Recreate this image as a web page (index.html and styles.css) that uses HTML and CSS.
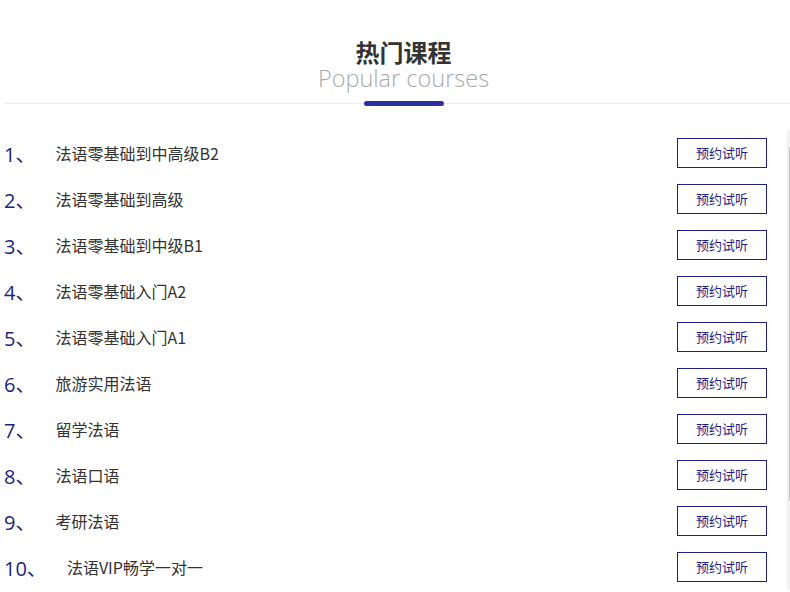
FILE: index.html
```html
<!DOCTYPE html>
<html lang="zh-CN">
<head>
    <meta charset="utf-8">
    <title>热门课程</title>
    <link rel="stylesheet" href="styles.css">
</head>
<body>
<div id="container">
    <div class="head">
        <h2>热门课程</h2>
        <p>Popular courses</p>
        <div class="bar"></div>
    </div>

    <div class="box">
        <ul class="course-list">
            <li class="item"><span class="num">1、</span><span class="name">法语零基础到中高级B2</span><a class="btn" href="#">预约试听</a></li>
            <li class="item"><span class="num">2、</span><span class="name">法语零基础到高级</span><a class="btn" href="#">预约试听</a></li>
            <li class="item"><span class="num">3、</span><span class="name">法语零基础到中级B1</span><a class="btn" href="#">预约试听</a></li>
            <li class="item"><span class="num">4、</span><span class="name">法语零基础入门A2</span><a class="btn" href="#">预约试听</a></li>
            <li class="item"><span class="num">5、</span><span class="name">法语零基础入门A1</span><a class="btn" href="#">预约试听</a></li>
            <li class="item"><span class="num">6、</span><span class="name">旅游实用法语</span><a class="btn" href="#">预约试听</a></li>
            <li class="item"><span class="num">7、</span><span class="name">留学法语</span><a class="btn" href="#">预约试听</a></li>
            <li class="item"><span class="num">8、</span><span class="name">法语口语</span><a class="btn" href="#">预约试听</a></li>
            <li class="item"><span class="num">9、</span><span class="name">考研法语</span><a class="btn" href="#">预约试听</a></li>
            <li class="item"><span class="num">10、</span><span class="name">法语VIP畅学一对一</span><a class="btn" href="#">预约试听</a></li>
        </ul>
        <div class="scroll"><div class="thumb"></div></div>
    </div>
</div>
</body>
</html>
```

FILE: styles.css
```css
html {
    overflow: hidden;
}

body {
    margin: 0;
    padding: 0;
    background: white;
    font-family: "Noto Sans CJK SC", "Noto Sans", sans-serif;
    color: #333;
}

#container {
    width: 799px;
    margin-left: 4px;
}

.head {
    text-align: center;
    padding-top: 38px;
    border-bottom: 1px solid #ececec;
}

.head h2 {
    margin: 0;
    font-size: 24px;
    line-height: 28px;
    font-weight: bold;
    color: #333;
}

.head p {
    margin: 0;
    font-family: "Open Sans", sans-serif;
    font-weight: 300;
    font-size: 23.5px;
    line-height: 24px;
    color: #aaa;
}

.bar {
    width: 80px;
    height: 5px;
    margin: 11px auto -3px;
    border-radius: 3px;
    background: #2b2fa3;
}

.box {
    display: flex;
    margin-top: 26px;
    width: 798px;
}

.course-list {
    flex: 1;
    list-style: none;
    margin: 0;
    padding: 0;
}

.item {
    display: flex;
    align-items: center;
    height: 46px;
}

.num {
    font-family: "Open Sans", "Noto Sans CJK SC", sans-serif;
    font-size: 20px;
    color: #1e1e86;
    margin-right: 20px;
}

.name {
    flex: 1;
    font-size: 16px;
    color: #333;
}

.btn {
    width: 88px;
    height: 28px;
    line-height: 28px;
    margin-right: 20px;
    border: 1px solid #1e1e86;
    text-align: center;
    font-size: 13px;
    color: #1e1e86;
    text-decoration: none;
}

.scroll {
    width: 11px;
    padding: 17px 2px 0;
    background: #f1f1f1;
}

.thumb {
    height: 354px;
    background: #c1c1c1;
}
```
